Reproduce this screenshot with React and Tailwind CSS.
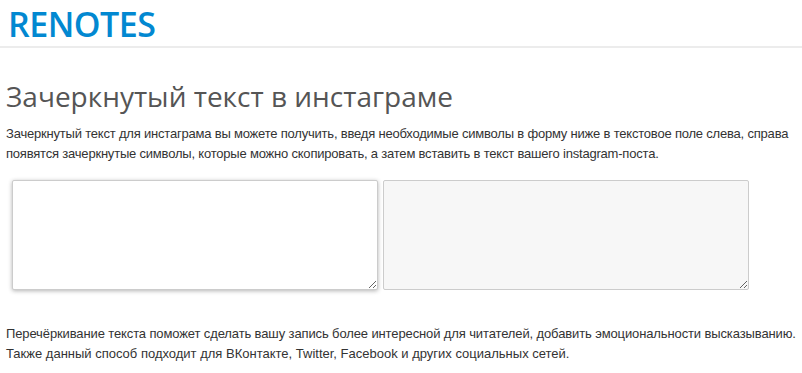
import React from 'react';

const sans = { fontFamily: '"Liberation Sans", Arial, sans-serif' };

export default function App() {
  return (
    <div className="bg-white min-h-screen" style={sans}>
      <header className="h-[48px] border-b-2 border-[#ececec] pl-[8px] flex items-start">
        <span className="pt-[1px] text-[34px] leading-[46px] font-semibold text-[#0288d1] font-['Open_Sans',sans-serif] tracking-[-0.5px]">
          RENOTES
        </span>
      </header>

      <main className="px-[6px]">
        <h1 className="mt-[29px] text-[28px] leading-[38px] font-normal text-[#555] font-['Open_Sans',sans-serif]">
          Зачеркнутый текст в инстаграме
        </h1>
        <p className="mt-[9px] text-[13px] leading-[20px] text-[#333] font-['Liberation_Sans',Arial,sans-serif] whitespace-nowrap tracking-[-0.2px]">
          <span className="block">
            Зачеркнутый текст для инстаграма вы можете получить, введя необходимые символы в форму ниже в текстовое поле слева, справа
          </span>
          <span className="block">
            появятся зачеркнутые символы, которые можно скопировать, а затем вставить в текст вашего instagram-поста.
          </span>
        </p>

        <div className="flex gap-[5px] pl-[6px] mt-[16px]">
          <textarea className="w-[366px] h-[110px] bg-white border border-[#ccc] rounded-[2px] shadow-[0_1px_4px_rgba(0,0,0,0.3)] outline-none" />
          <textarea
            readOnly
            className="w-[366px] h-[110px] bg-[#f7f7f7] border border-[#ccc] rounded-[2px] outline-none"
          />
        </div>

        <p className="mt-[34px] text-[13px] leading-[20px] text-[#333] font-['Liberation_Sans',Arial,sans-serif] whitespace-nowrap">
          <span className="block tracking-[-0.12px]">
            Перечёркивание текста поможет сделать вашу запись более интересной для читателей, добавить эмоциональности высказыванию.
          </span>
          <span className="block">
            Также данный способ подходит для ВКонтакте, Twitter, Facebook и других социальных сетей.
          </span>
        </p>
      </main>
    </div>
  );
}
